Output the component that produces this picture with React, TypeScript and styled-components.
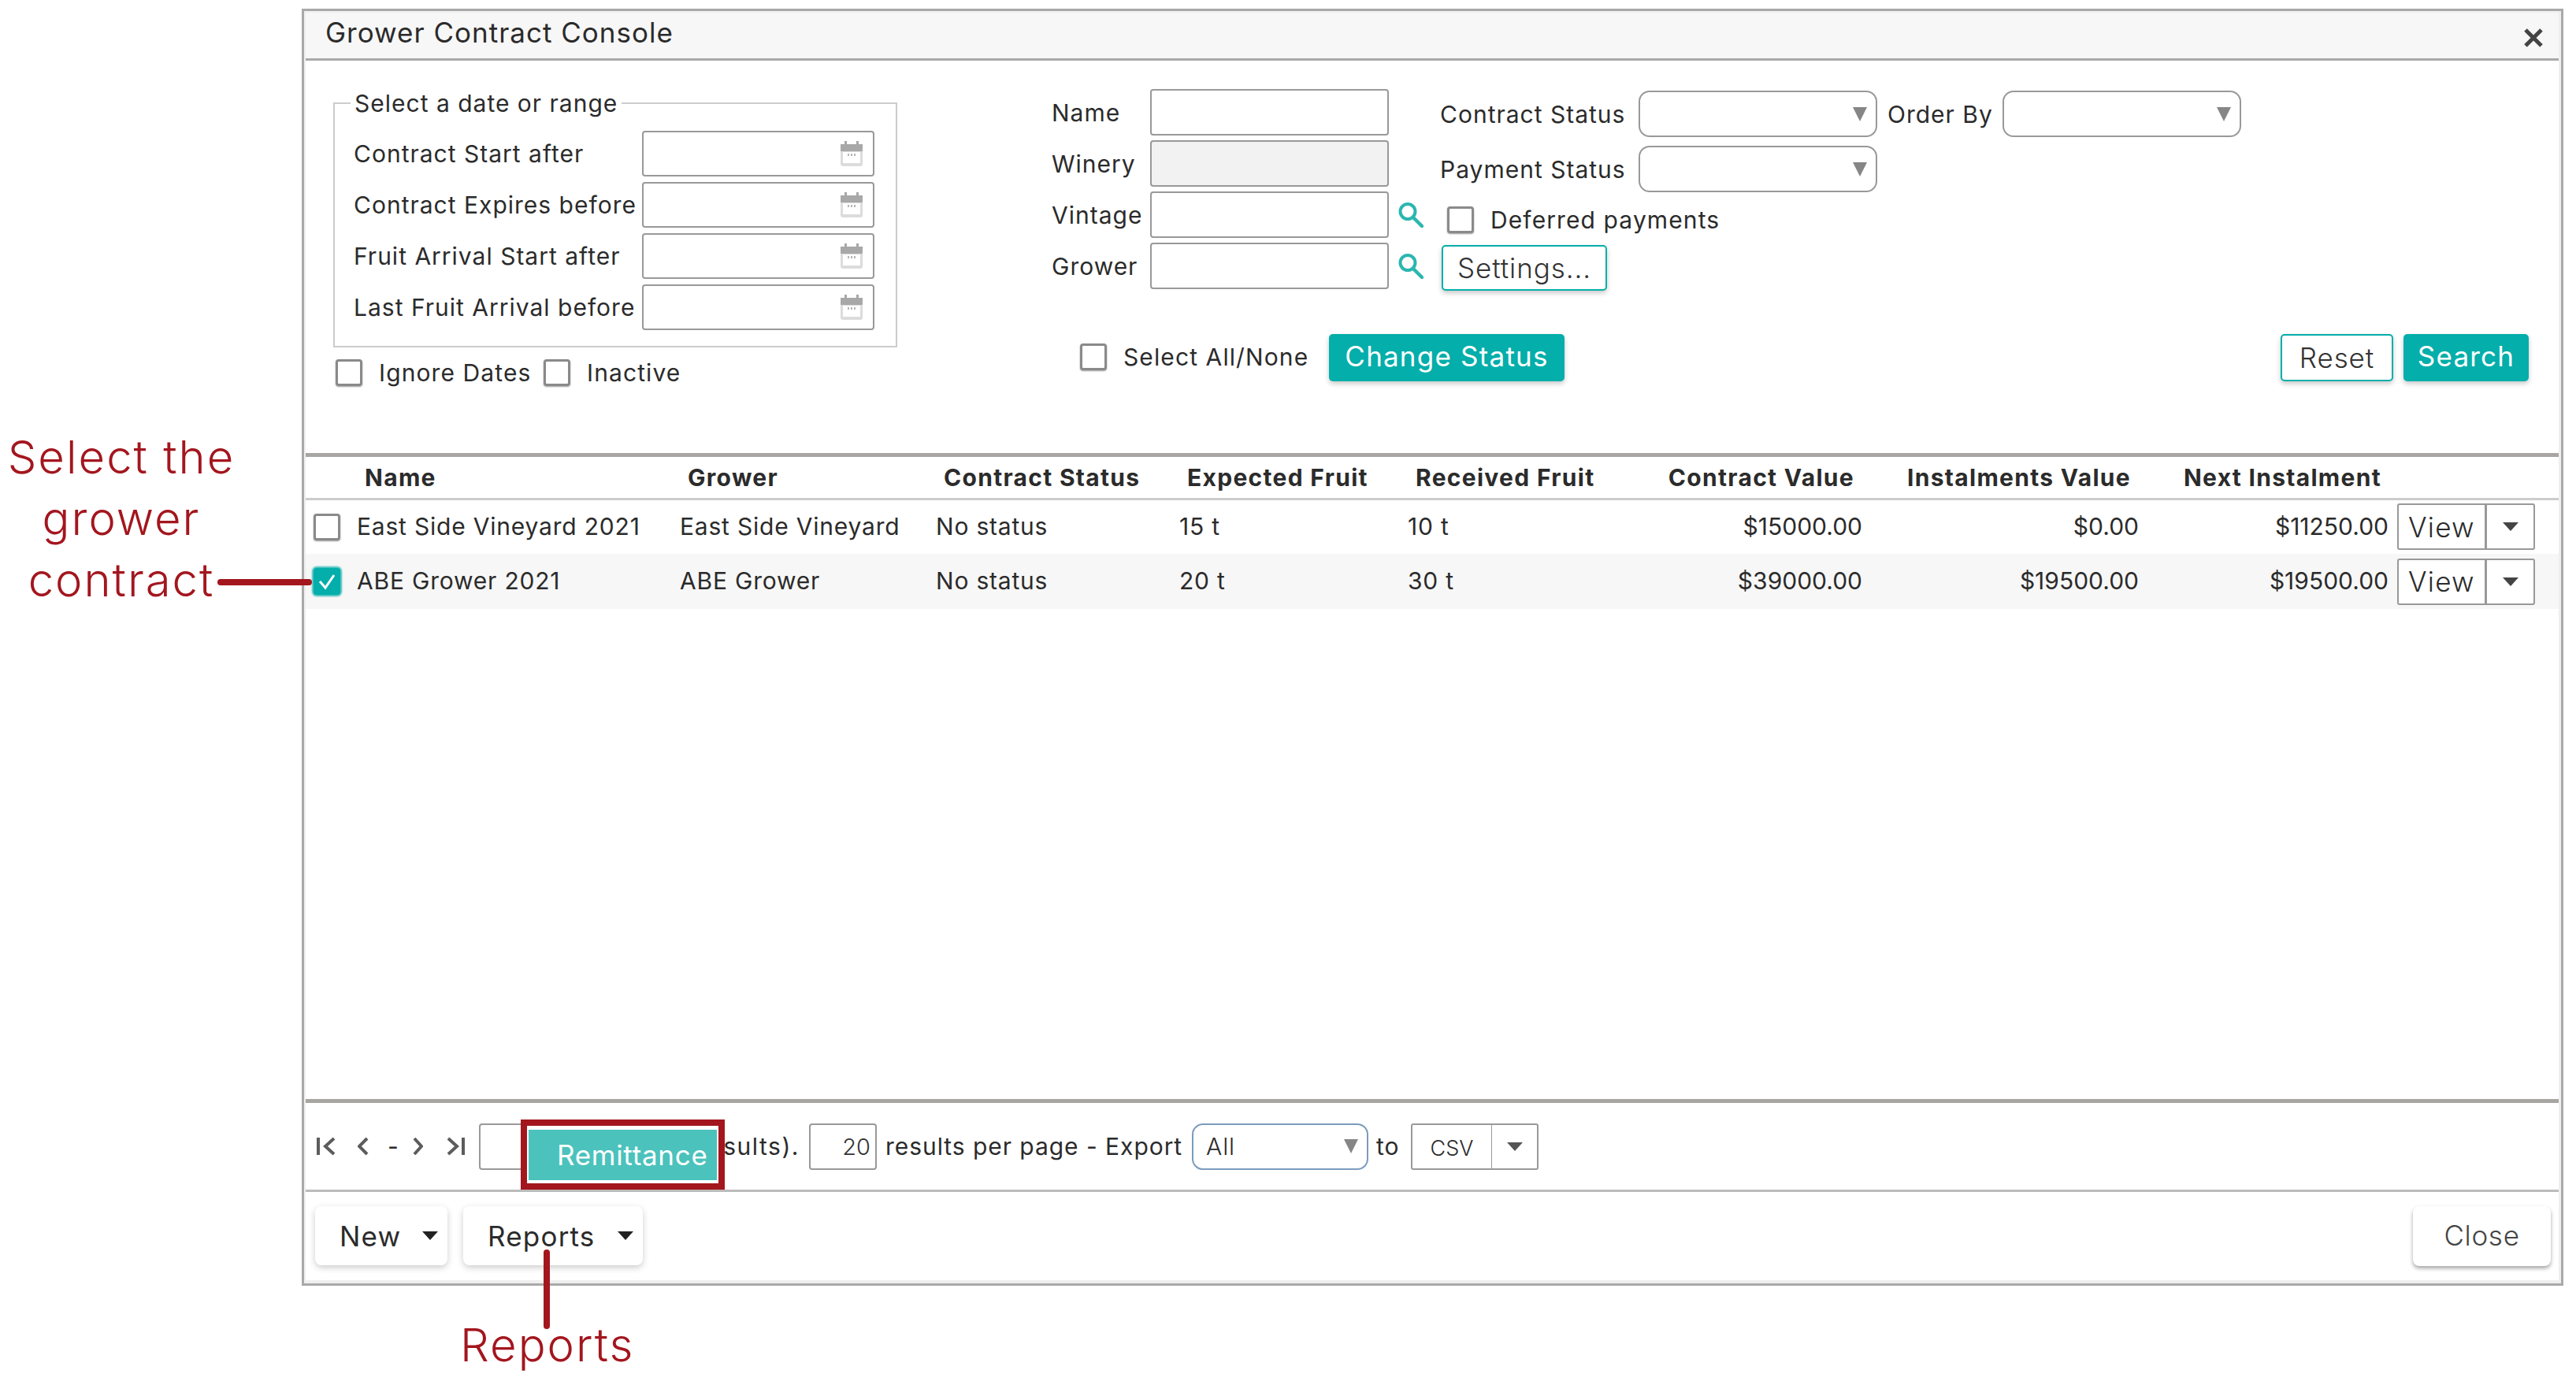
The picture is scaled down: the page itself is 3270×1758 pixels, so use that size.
import styled, { createGlobalStyle } from "styled-components";

const RED = "#a3161e";
const TEAL = "#04aeaa";

const GlobalStyle = createGlobalStyle`
  html, body {
    margin: 0;
    padding: 0;
    background: #ffffff;
  }
  * {
    box-sizing: border-box;
  }
  body {
    font-family: Inter, "Liberation Sans", sans-serif;
    color: #2b2b2b;
  }
`;

const Page = styled.div`
  position: relative;
  width: 3270px;
  height: 1758px;
  padding: 11px 16px 0 383px;
  overflow: hidden;
`;
const Window = styled.div`
  width: 2871px;
  height: 1621px;
  border: 3px solid #a9a9a9;
  background: #efefef;
  padding: 2px 3px 4px 2px;
  display: flex;
  flex-direction: column;
`;
const TitleBar = styled.div`
  height: 61px;
  flex: none;
  background: #f7f7f7;
  border-bottom: 3px solid #a9a9a9;
  display: flex;
  justify-content: space-between;
  align-items: center;
  padding: 0 20px 0 25px;
`;
const Title = styled.div`
  font-size: 35px;
  padding-bottom: 8px;
  letter-spacing: 1px;
`;
const CloseIcon = styled.svg`
  width: 24px;
  height: 24px;
  margin-top: 6px;
`;
const Body = styled.div`
  flex: 1;
  background: #ffffff;
  display: flex;
  flex-direction: column;
`;
const SearchArea = styled.div`
  height: 498px;
  flex: none;
  display: flex;
`;
const LeftCol = styled.div`
  width: 716px;
  margin-left: 35px;
  padding-top: 36px;
`;
const DateSet = styled.fieldset`
  margin: 0;
  border: 2px solid #cccccc;
  padding: 17px 27px 20px 24px;
  min-width: 0;
`;
const DateLegend = styled.legend`
  font-size: 30px;
  letter-spacing: 1px;
  line-height: 36px;
  padding: 0 5px;
  margin-left: -4px;
`;
const DateGrid = styled.div`
  display: grid;
  grid-template-columns: 366px 295px;
  row-gap: 7px;
  align-items: center;
`;
const Label = styled.label`
  font-size: 30px;
  letter-spacing: 1px;
  white-space: nowrap;
`;
const DateBox = styled.div`
  height: 58px;
  border: 2px solid #999999;
  border-radius: 4px;
  display: flex;
  align-items: center;
  justify-content: flex-end;
  padding-right: 12px;
`;
const CheckRow = styled.div`
  display: flex;
  align-items: center;
  margin-top: 14px;
  padding-left: 3px;
`;
const CheckBox = styled.span<{ $checked?: boolean }>`
  width: 34px;
  height: 34px;
  flex: none;
  border-radius: 4px;
  display: flex;
  align-items: center;
  justify-content: center;
  background: ${(p) => (p.$checked ? TEAL : "#ffffff")};
  border: ${(p) => (p.$checked ? `2px solid ${TEAL}` : "3px solid #8a8a8a")};
  box-shadow: ${(p) =>
    p.$checked ? `0 0 2px 2px rgba(4,174,170,0.75)` : "0 1px 2px rgba(0,0,0,0.4)"};
`;
const CheckText = styled.span<{ $width?: number }>`
  font-size: 30px;
  letter-spacing: 1.1px;
  margin-left: 21px;
  ${(p) => (p.$width ? `width: ${p.$width}px;` : "")}
  white-space: nowrap;
`;
const RightCol = styled.div`
  flex: 1;
  margin-left: 197px;
  padding-top: 36px;
  display: flex;
  flex-direction: column;
`;
const FieldsRow = styled.div`
  display: flex;
`;
const NameGrid = styled.div`
  width: 493px;
  flex: none;
  display: grid;
  grid-template-columns: 125px 303px 50px;
  grid-auto-rows: 59px;
  row-gap: 6px;
  align-items: center;
  margin-left: -1px;
`;
const TextBox = styled.input<{ $disabled?: boolean }>`
  width: 100%;
  height: 59px;
  border: 2px solid #999999;
  border-radius: 4px;
  background: ${(p) => (p.$disabled ? "#f2f2f2" : "#ffffff")};
  outline: none;
`;
const SearchIcon = styled.svg`
  width: 33px;
  height: 33px;
  margin-left: 11px;
`;
const StatusCol = styled.div`
  padding-top: 2px;
  display: flex;
  flex-direction: column;
`;
const StatusRow = styled.div`
  display: flex;
  align-items: center;
  margin-bottom: 11px;
`;
const StatusLabel = styled(Label)<{ $width: number; $left?: number }>`
  width: ${(p) => p.$width}px;
  margin-left: ${(p) => p.$left ?? 0}px;
`;
const SelectBox = styled.div<{ $width?: number; $focus?: boolean }>`
  width: ${(p) => p.$width ?? 303}px;
  height: 59px;
  flex: none;
  border: 2px solid ${(p) => (p.$focus ? "#7a9cbc" : "#999999")};
  border-radius: 14px;
  background: #ffffff;
  display: flex;
  align-items: center;
  justify-content: space-between;
  padding: 0 11px 0 16px;
  font-size: 30px;
  font-weight: 300;
`;
const DeferredRow = styled.div`
  display: flex;
  align-items: center;
  margin-top: 6px;
  padding-left: 9px;
`;
const OutlineButton = styled.button<{ $width: number }>`
  width: ${(p) => p.$width}px;
  height: 58px;
  border: 2px solid ${TEAL};
  border-radius: 5px;
  background: #ffffff;
  color: #333333;
  font-family: inherit;
  font-size: 35px;
  letter-spacing: 0.9px;
  font-weight: 300;
  padding: 0 0 1px;
  box-shadow: 0 3px 6px rgba(0, 0, 0, 0.22);
`;
const SettingsButton = styled(OutlineButton)`
  margin: 14px 0 0 2px;
`;
const SolidButton = styled.button<{ $width: number }>`
  width: ${(p) => p.$width}px;
  height: 60px;
  border: none;
  border-radius: 5px;
  background: ${TEAL};
  color: #ffffff;
  font-family: inherit;
  font-size: 35px;
  letter-spacing: 1.2px;
  padding: 0 0 4px;
  box-shadow: 0 3px 6px rgba(0, 0, 0, 0.22);
`;
const ActionRow = styled.div`
  display: flex;
  align-items: center;
  margin-top: 55px;
  padding: 0 38px 0 35px;
`;
const SelectAll = styled.div`
  width: 316px;
  flex: none;
  display: flex;
  align-items: center;
  padding-bottom: 3px;
`;
const ResultActions = styled.div`
  margin-left: auto;
  display: flex;
  gap: 13px;
`;
const ResetButton = styled(OutlineButton)`
  height: 60px;
`;
const TableArea = styled.div`
  flex: 1;
  border-top: 5px solid #a8a6a2;
`;
const Table = styled.table`
  width: 100%;
  table-layout: fixed;
  border-collapse: collapse;
  border-spacing: 0;
`;
const Th = styled.th<{ $right?: boolean; $pad?: number }>`
  height: 53px;
  font-size: 30px;
  letter-spacing: 1.3px;
  font-weight: 700;
  text-align: ${(p) => (p.$right ? "right" : "left")};
  padding: 0 ${(p) => (p.$right ? (p.$pad ?? 20) + "px" : "0")} 0
    ${(p) => (p.$right ? "0" : "20px")};
  border-bottom: 3px solid #cccccc;
  white-space: nowrap;
`;
const Tr = styled.tr<{ $shade?: boolean }>`
  background: ${(p) => (p.$shade ? "#f7f7f7" : "#ffffff")};
`;
const Td = styled.td<{ $right?: boolean }>`
  height: 70px;
  font-size: 30px;
  letter-spacing: ${(p) => (p.$right ? "0" : "0.8px")};
  text-align: ${(p) => (p.$right ? "right" : "left")};
  padding: 0 ${(p) => (p.$right ? "10px" : "0")} 2px ${(p) => (p.$right ? "0" : "10px")};
  white-space: nowrap;
`;
const CheckCell = styled.td`
  padding: 0 0 0 10px;
`;
const ViewGroup = styled.div`
  width: 175px;
  height: 59px;
  border: 2px solid #999999;
  border-radius: 3px;
  background: #ffffff;
  display: flex;
`;
const ViewLabel = styled.div`
  width: 112px;
  flex: none;
  border-right: 3px solid #999999;
  display: flex;
  align-items: center;
  padding-left: 12px;
  font-size: 35px;
  letter-spacing: 1.2px;
  font-weight: 300;
`;
const ViewCaret = styled.div`
  flex: 1;
  display: flex;
  align-items: center;
  justify-content: center;
`;
const PagerBar = styled.div`
  height: 118px;
  flex: none;
  border-top: 5px solid #a8a6a2;
  border-bottom: 3px solid #bbbbbb;
  display: flex;
  align-items: center;
  padding: 0 0 0 14px;
  font-size: 30px;
  letter-spacing: 0.95px;
`;
const PagerIcon = styled.svg<{ $left?: number }>`
  height: 24px;
  flex: none;
  margin-left: ${(p) => p.$left ?? 0}px;
`;
const PagerDash = styled.span`
  width: 8px;
  margin-left: 24px;
  flex: none;
`;
const PageInput = styled.input<{ $width: number; $left: number }>`
  width: ${(p) => p.$width}px;
  height: 59px;
  margin-left: ${(p) => p.$left}px;
  flex: none;
  border: 2px solid #999999;
  border-radius: 4px;
  font-family: inherit;
  font-size: 29px;
  font-weight: 300;
  color: #333333;
  text-align: right;
  padding: 0 6px 0 0;
  background: #ffffff;
`;
const ResultCount = styled.span`
  width: 287px;
  flex: none;
  text-align: right;
  white-space: nowrap;
  letter-spacing: 1.5px;
`;
const PerPage = styled.span`
  margin-left: 11px;
  width: 389px;
  flex: none;
  white-space: nowrap;
`;
const ToLabel = styled.span`
  margin-left: 10px;
  width: 44px;
  flex: none;
`;
const FormatGroup = styled.div`
  width: 162px;
  height: 59px;
  flex: none;
  border: 2px solid #999999;
  border-radius: 3px;
  display: flex;
`;
const FormatLabel = styled.div`
  width: 101px;
  flex: none;
  border-right: 1px solid #999999;
  display: flex;
  align-items: center;
  justify-content: center;
  font-size: 27px;
  letter-spacing: 0;
  font-weight: 300;
  padding-top: 4px;
`;
const FooterBar = styled.div`
  height: 112px;
  flex: none;
  background: #ffffff;
  display: flex;
  justify-content: space-between;
  padding: 18px 10px 0 12px;
`;
const FooterGroup = styled.div`
  display: flex;
  gap: 20px;
`;
const MenuButton = styled.button<{ $width: number }>`
  width: ${(p) => p.$width}px;
  height: 75px;
  border: none;
  border-radius: 8px;
  background: #ffffff;
  color: #2b2b2b;
  font-family: inherit;
  font-size: 35px;
  letter-spacing: 1.2px;
  padding: 0 12px 0 31px;
  display: flex;
  align-items: center;
  justify-content: space-between;
  box-shadow: 0 3px 9px rgba(0, 0, 0, 0.2);
`;
const CloseButton = styled.button`
  width: 175px;
  height: 76px;
  border: none;
  border-radius: 8px;
  background: #ffffff;
  color: #444444;
  font-family: inherit;
  font-size: 35px;
  letter-spacing: 0.7px;
  font-weight: 300;
  padding: 0 0 2px;
  box-shadow: 0 3px 5px rgba(0, 0, 0, 0.35);
`;
const Callout = styled.div`
  position: absolute;
  left: 4px;
  top: 541px;
  width: 300px;
  color: ${RED};
  font-size: 58px;
  letter-spacing: 2px;
  font-weight: 300;
  line-height: 78px;
  text-align: center;
`;
const ReportsCallout = styled.div`
  position: absolute;
  left: 584px;
  top: 1677px;
  color: ${RED};
  font-size: 58px;
  letter-spacing: 2px;
  font-weight: 300;
  line-height: 60px;
`;
const Pointer = styled.div<{ $vertical?: boolean }>`
  position: absolute;
  background: ${RED};
  border-radius: 4px;
  left: ${(p) => (p.$vertical ? 690 : 276)}px;
  top: ${(p) => (p.$vertical ? 1586 : 735)}px;
  width: ${(p) => (p.$vertical ? 8 : 120)}px;
  height: ${(p) => (p.$vertical ? 101 : 8)}px;
`;
const RemittanceFrame = styled.div`
  position: absolute;
  left: 661px;
  top: 1421px;
  width: 259px;
  height: 89px;
  border: 8px solid ${RED};
  background: #ffffff;
  padding: 5px 2px 4px 2px;
`;
const RemittanceFill = styled.div`
  height: 100%;
  background: #4bc2bc;
  color: #ffffff;
  font-size: 35px;
  letter-spacing: 0.7px;
  display: flex;
  align-items: center;
  padding-left: 36px;
`;

const Calendar = () => (
  <svg width="30" height="33" viewBox="0 0 30 33">
    <rect x="1" y="4" width="28" height="28" rx="3" fill="#dcdcdc" />
    <rect x="1" y="4" width="28" height="9" fill="#a8a8a8" />
    <rect x="6" y="0" width="3" height="6" fill="#a8a8a8" />
    <rect x="21" y="0" width="3" height="6" fill="#a8a8a8" />
    <rect x="4" y="14" width="22" height="14" fill="#ffffff" />
    <rect x="10" y="16" width="2" height="3" fill="#b5b5b5" />
    <rect x="14" y="16" width="2" height="3" fill="#b5b5b5" />
    <rect x="18" y="16" width="2" height="3" fill="#b5b5b5" />
  </svg>
);

const Magnifier = () => (
  <SearchIcon viewBox="0 0 33 33" fill="none" stroke="#2bb6b0" strokeLinecap="round">
    <circle cx="13" cy="12.5" r="9.5" strokeWidth="4" />
    <line x1="20" y1="20" x2="31" y2="31" strokeWidth="4.5" />
  </SearchIcon>
);

const SelectArrow = () => (
  <svg width="18" height="18" viewBox="0 0 18 18">
    <path d="M0 0 L18 0 L9 18 Z" fill="#868686" />
  </svg>
);

const Caret = ({ color = "#444444", w = 20, h = 11 }: { color?: string; w?: number; h?: number }) => (
  <svg width={w} height={h} viewBox="0 0 18 10" preserveAspectRatio="none">
    <path d="M0 0 L18 0 L9 10 Z" fill={color} />
  </svg>
);

const Check = () => (
  <svg width="24" height="22" viewBox="0 0 24 22" fill="none" stroke="#ffffff" strokeWidth="3">
    <path d="M3 11 L10 19 L21 3" />
  </svg>
);

const rows = [
  {
    name: "East Side Vineyard 2021",
    grower: "East Side Vineyard",
    expected: "15 t",
    received: "10 t",
    value: "$15000.00",
    instalments: "$0.00",
    next: "$11250.00",
    checked: false,
  },
  {
    name: "ABE Grower 2021",
    grower: "ABE Grower",
    expected: "20 t",
    received: "30 t",
    value: "$39000.00",
    instalments: "$19500.00",
    next: "$19500.00",
    checked: true,
  },
];

const dateLabels = [
  "Contract Start after",
  "Contract Expires before",
  "Fruit Arrival Start after",
  "Last Fruit Arrival before",
];

const colWidths = [55, 410, 325, 309, 290, 223, 374, 351, 317, 206];

function App() {
  return (
    <Page>
      <GlobalStyle />
      <Window>
        <TitleBar>
          <Title>Grower Contract Console</Title>
          <CloseIcon viewBox="0 0 24 24" fill="none" stroke="#444444" strokeWidth="5">
            <path d="M2 2 L22 22 M22 2 L2 22" />
          </CloseIcon>
        </TitleBar>
        <Body>
          <SearchArea>
            <LeftCol>
              <DateSet>
                <DateLegend>Select a date or range</DateLegend>
                <DateGrid>
                  {dateLabels.map((label) => (
                    <>
                      <Label key={label}>{label}</Label>
                      <DateBox>
                        <Calendar />
                      </DateBox>
                    </>
                  ))}
                </DateGrid>
              </DateSet>
              <CheckRow>
                <CheckBox />
                <CheckText $width={209}>Ignore Dates</CheckText>
                <CheckBox />
                <CheckText>Inactive</CheckText>
              </CheckRow>
            </LeftCol>
            <RightCol>
              <FieldsRow>
                <NameGrid>
                  <Label>Name</Label>
                  <TextBox />
                  <span />
                  <Label>Winery</Label>
                  <TextBox $disabled disabled />
                  <span />
                  <Label>Vintage</Label>
                  <TextBox />
                  <Magnifier />
                  <Label>Grower</Label>
                  <TextBox />
                  <Magnifier />
                </NameGrid>
                <StatusCol>
                  <StatusRow>
                    <StatusLabel $width={252}>Contract Status</StatusLabel>
                    <SelectBox>
                      <span />
                      <SelectArrow />
                    </SelectBox>
                    <StatusLabel $width={146} $left={13}>
                      Order By
                    </StatusLabel>
                    <SelectBox>
                      <span />
                      <SelectArrow />
                    </SelectBox>
                  </StatusRow>
                  <StatusRow>
                    <StatusLabel $width={252}>Payment Status</StatusLabel>
                    <SelectBox>
                      <span />
                      <SelectArrow />
                    </SelectBox>
                  </StatusRow>
                  <DeferredRow>
                    <CheckBox />
                    <CheckText>Deferred payments</CheckText>
                  </DeferredRow>
                  <SettingsButton $width={210}>Settings...</SettingsButton>
                </StatusCol>
              </FieldsRow>
              <ActionRow>
                <SelectAll>
                  <CheckBox />
                  <CheckText>Select All/None</CheckText>
                </SelectAll>
                <SolidButton $width={299}>Change Status</SolidButton>
                <ResultActions>
                  <ResetButton $width={143}>Reset</ResetButton>
                  <SolidButton $width={159}>Search</SolidButton>
                </ResultActions>
              </ActionRow>
            </RightCol>
          </SearchArea>
          <TableArea>
            <Table>
              <colgroup>
                {colWidths.map((w, i) => (
                  <col key={i} width={w} />
                ))}
              </colgroup>
              <thead>
                <tr>
                  <Th />
                  <Th>Name</Th>
                  <Th>Grower</Th>
                  <Th>Contract Status</Th>
                  <Th>Expected Fruit</Th>
                  <Th>Received Fruit</Th>
                  <Th $right>Contract Value</Th>
                  <Th $right>Instalments Value</Th>
                  <Th $right $pad={19}>
                    Next Instalment
                  </Th>
                  <Th />
                </tr>
              </thead>
              <tbody>
                {rows.map((row, i) => (
                  <Tr key={row.name} $shade={i === 1}>
                    <CheckCell>
                      <CheckBox $checked={row.checked}>{row.checked && <Check />}</CheckBox>
                    </CheckCell>
                    <Td>{row.name}</Td>
                    <Td>{row.grower}</Td>
                    <Td>No status</Td>
                    <Td>{row.expected}</Td>
                    <Td>{row.received}</Td>
                    <Td $right>{row.value}</Td>
                    <Td $right>{row.instalments}</Td>
                    <Td $right>{row.next}</Td>
                    <td>
                      <ViewGroup>
                        <ViewLabel>View</ViewLabel>
                        <ViewCaret>
                          <Caret />
                        </ViewCaret>
                      </ViewGroup>
                    </td>
                  </Tr>
                ))}
              </tbody>
            </Table>
          </TableArea>
          <PagerBar>
            <PagerIcon width="25" viewBox="0 0 25 24" fill="none" stroke="#5c5c5c" strokeWidth="4">
              <path d="M2 1 V23 M22 2 L11 12 L22 22" />
            </PagerIcon>
            <PagerIcon $left={27} width="14" viewBox="0 0 14 24" fill="none" stroke="#5c5c5c" strokeWidth="4">
              <path d="M12 2 L2 12 L12 22" />
            </PagerIcon>
            <PagerDash>-</PagerDash>
            <PagerIcon $left={24} width="13" viewBox="0 0 13 24" fill="none" stroke="#5c5c5c" strokeWidth="4">
              <path d="M2 2 L11 12 L2 22" />
            </PagerIcon>
            <PagerIcon $left={30} width="23" viewBox="0 0 23 24" fill="none" stroke="#5c5c5c" strokeWidth="4">
              <path d="M21 1 V23 M2 2 L13 12 L2 22" />
            </PagerIcon>
            <PageInput $width={120} $left={18} />
            <ResultCount>(2 results).</ResultCount>
            <PageInput $width={86} $left={12} defaultValue="20" />
            <PerPage>results per page - Export</PerPage>
            <SelectBox $width={224} $focus>
              <span>All</span>
              <SelectArrow />
            </SelectBox>
            <ToLabel>to</ToLabel>
            <FormatGroup>
              <FormatLabel>CSV</FormatLabel>
              <ViewCaret>
                <Caret color="#555555" />
              </ViewCaret>
            </FormatGroup>
          </PagerBar>
          <FooterBar>
            <FooterGroup>
              <MenuButton $width={168}>
                New
                <Caret color="#222222" />
              </MenuButton>
              <MenuButton $width={228}>
                Reports
                <Caret color="#222222" />
              </MenuButton>
            </FooterGroup>
            <CloseButton>Close</CloseButton>
          </FooterBar>
        </Body>
      </Window>
      <Callout>
        Select the
        <br />
        grower
        <br />
        contract
      </Callout>
      <Pointer />
      <Pointer $vertical />
      <ReportsCallout>Reports</ReportsCallout>
      <RemittanceFrame>
        <RemittanceFill>Remittance</RemittanceFill>
      </RemittanceFrame>
    </Page>
  );
}

export default App;
